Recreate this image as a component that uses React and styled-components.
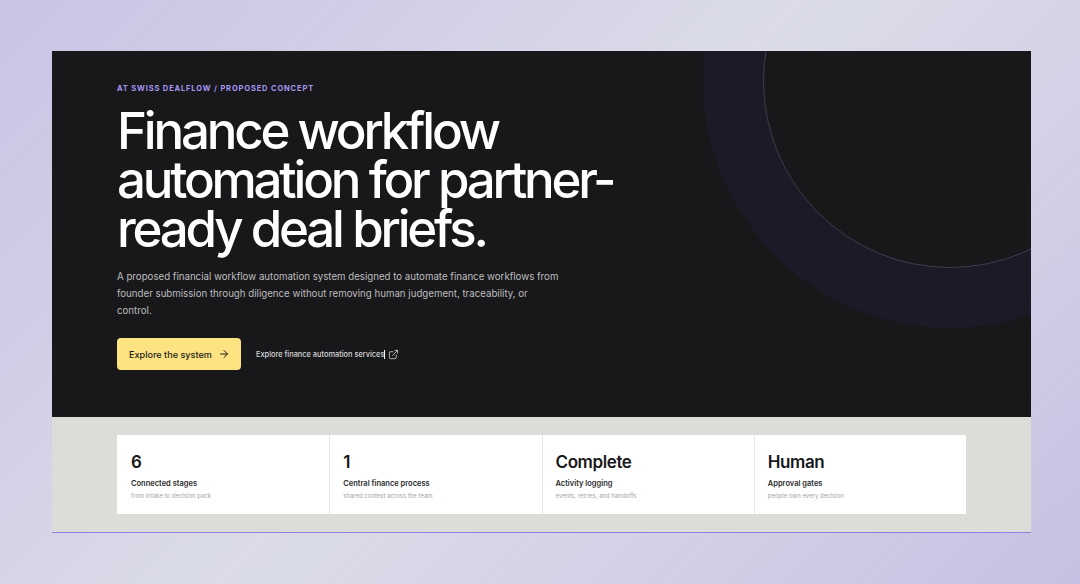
import styled, { createGlobalStyle } from 'styled-components';
import { ArrowRight, ExternalLink } from 'lucide-react';

const stats = [
  { value: '6', label: 'Connected stages', note: 'from intake to decision pack' },
  { value: '1', label: 'Central finance process', note: 'shared context across the team' },
  { value: 'Complete', label: 'Activity logging', note: 'events, retries, and handoffs' },
  { value: 'Human', label: 'Approval gates', note: 'people own every decision' },
];

export default function App() {
  return (
    <>
      <GlobalStyle />
      <Page>
        <Frame>
          <Hero>
            <Ring />
            <Eyebrow>AT SWISS DEALFLOW / PROPOSED CONCEPT</Eyebrow>
            <Title>Finance workflow automation for partner-ready deal briefs.</Title>
            <Lead>
              A proposed financial workflow automation system designed to automate finance workflows from
              founder submission through diligence without removing human judgement, traceability, or
              control.
            </Lead>
            <Actions>
              <PrimaryButton>
                Explore the system
                <ArrowRight size={12} strokeWidth={2} />
              </PrimaryButton>
              <SecondaryLink>
                <Caret>Explore finance automation services</Caret>
                <ExternalLink size={11} strokeWidth={1.75} />
              </SecondaryLink>
            </Actions>
          </Hero>
          <StatsBand>
            <StatsGrid>
              {stats.map((stat) => (
                <Stat key={stat.label}>
                  <StatValue>{stat.value}</StatValue>
                  <StatLabel>{stat.label}</StatLabel>
                  <StatNote>{stat.note}</StatNote>
                </Stat>
              ))}
            </StatsGrid>
          </StatsBand>
        </Frame>
      </Page>
    </>
  );
}

const GlobalStyle = createGlobalStyle`
  html, body {
    margin: 0;
    padding: 0;
  }

  * {
    box-sizing: border-box;
  }

  body {
    font-family: 'Inter', 'Liberation Sans', sans-serif;
  }
`;

const Page = styled.div`
  width: 1080px;
  height: 584px;
  padding: 51px 49px 0 52px;
  overflow: hidden;
  background: linear-gradient(135deg, #c9c4e4 0%, #d0cee6 22%, #dbdce8 48%, #d3d1e6 72%, #c7c0e2 100%);
`;

const Frame = styled.div`
  width: 979px;
  height: 482px;
  display: flex;
  flex-direction: column;
  border-bottom: 1px solid #8f7fe0;
`;

const Hero = styled.section`
  position: relative;
  height: 366px;
  padding: 33px 65px 0;
  overflow: hidden;
  background: #18181a;
`;

const Ring = styled.div`
  position: absolute;
  top: -157px;
  left: 711px;
  width: 374px;
  height: 374px;
  border: 1px solid #3f3d52;
  border-radius: 50%;
  box-shadow: 0 0 0 60px #1c1a26;
`;

const Eyebrow = styled.div`
  position: relative;
  font-size: 7.5px;
  line-height: 10px;
  font-weight: 700;
  letter-spacing: 0.86px;
  color: #a596f2;
`;

const Title = styled.h1`
  position: relative;
  width: 520px;
  margin: 12px 0 0;
  font-size: 51px;
  line-height: 49px;
  font-weight: 500;
  letter-spacing: -3.2px;
  color: #ffffff;
`;

const Lead = styled.p`
  position: relative;
  width: 446px;
  margin: 15px 0 0;
  font-size: 9.7px;
  line-height: 17px;
  color: #bdbdbf;
`;

const Actions = styled.div`
  position: relative;
  display: flex;
  align-items: center;
  gap: 15px;
  margin-top: 19px;
`;

const PrimaryButton = styled.button`
  display: flex;
  align-items: center;
  flex-shrink: 0;
  gap: 6px;
  width: 124px;
  height: 32px;
  padding: 0 12px;
  border: none;
  border-radius: 4px;
  background: #fde381;
  font-family: inherit;
  font-size: 9.1px;
  font-weight: 500;
  white-space: nowrap;
  color: #1d1c1a;

  svg {
    flex-shrink: 0;
  }
`;

const SecondaryLink = styled.a`
  display: flex;
  align-items: center;
  gap: 3px;
  font-size: 7.4px;
  font-weight: 500;
  color: #d8d8da;
`;

const Caret = styled.span`
  border-right: 1px solid #ffffff;
`;

const StatsBand = styled.section`
  flex: 1;
  padding: 18px 65px 0;
  background: #dcdcd8;
`;

const StatsGrid = styled.div`
  display: grid;
  grid-template-columns: repeat(4, 1fr);
  height: 79px;
  background: #ffffff;
`;

const Stat = styled.div`
  padding: 17px 14px 0 13px;
  border-left: 1px solid #e6e6e4;

  &:first-child {
    padding-left: 14px;
    border-left: none;
  }
`;

const StatValue = styled.div`
  font-size: 17px;
  line-height: 20px;
  font-weight: 600;
  letter-spacing: -0.4px;
  color: #18181a;
`;

const StatLabel = styled.div`
  margin-top: 7px;
  font-size: 7.5px;
  line-height: 10px;
  font-weight: 600;
  color: #2a2a2c;
`;

const StatNote = styled.div`
  margin-top: 2px;
  font-size: 6px;
  line-height: 9px;
  color: #a5a5a5;
`;
